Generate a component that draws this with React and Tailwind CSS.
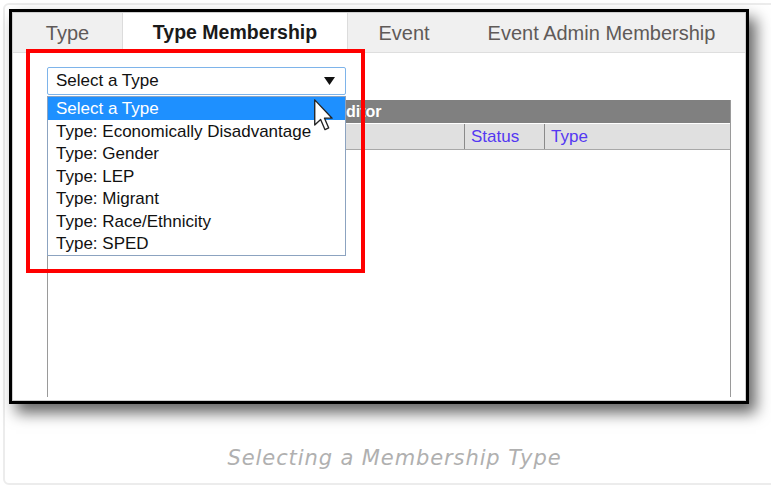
import React from 'react';

const options = [
  'Select a Type',
  'Type: Economically Disadvantage',
  'Type: Gender',
  'Type: LEP',
  'Type: Migrant',
  'Type: Race/Ethnicity',
  'Type: SPED',
];

const tabs = [
  { label: 'Type', width: 'w-[109px]' },
  { label: 'Type Membership', width: 'w-[226px]', active: true },
  { label: 'Event', width: 'w-[112px]' },
  { label: 'Event Admin Membership', width: 'w-[283px]' },
];

// Classic arrow pointer
const Pointer = () => (
  <svg width="22" height="32" viewBox="0 0 12 19" className="absolute left-[313px] top-[99px] z-30">
    <path
      d="M0.5 0.5 L0.5 15.5 L4 12.2 L6.6 18.2 L8.8 17.2 L6.3 11.4 L10.8 11.4 Z"
      fill="#fff"
      stroke="#222"
      strokeWidth="0.8"
      strokeLinejoin="round"
    />
  </svg>
);

const TabBar = () => (
  <div className="flex h-[40px] bg-[#f0f0f0] border-b border-[#dedede]">
    {tabs.map((tab) =>
      tab.active ? (
        <div
          key={tab.label}
          className={`${tab.width} flex items-center justify-center bg-white border-x border-[#dcdcdc] -mb-px text-[19.5px] font-bold text-[#1a1a1a]`}
        >
          {tab.label}
        </div>
      ) : (
        <div
          key={tab.label}
          className={`${tab.width} flex items-center justify-center text-[20px] text-[#5f5a58]`}
        >
          {tab.label}
        </div>
      )
    )}
  </div>
);

const TypeSelect = () => (
  <div className="relative w-[299px]">
    <div className="flex h-[28px] items-center justify-between rounded-[2px] border border-[#7eb4ea] bg-white pl-[8px] pr-[10px] text-[17px] text-[#111]">
      <span>Select a Type</span>
      <svg width="11" height="8" viewBox="0 0 11 8">
        <polygon points="0,0 11,0 5.5,8" fill="#111" />
      </svg>
    </div>
    {/* open option list */}
    <div className="absolute left-0 top-[29px] z-10 w-[299px] border border-[#8ca3c0] bg-white">
      {options.map((opt, i) => (
        <div
          key={opt}
          className={
            i === 0
              ? 'flex h-[22.5px] items-center bg-[#1e90ff] pl-[8px] pt-px text-[17px] text-white'
              : 'flex h-[22.5px] items-center pl-[8px] pt-px text-[17px] text-[#111]'
          }
        >
          {opt}
        </div>
      ))}
    </div>
  </div>
);

const MembershipTable = () => (
  <div className="mt-[5px] flex w-[684px] flex-1 flex-col border-x border-[#9a9a9a]">
    <div className="flex h-[23px] items-center bg-[#808080] pl-[148px] text-[16px] font-bold text-white">
      Type Membership Editor
    </div>
    <div className="flex h-[27px] border-t border-white border-b border-b-[#a8a8a8] bg-[#e0e0e0] text-[17px] text-[#5438f2]">
      <div className="w-[417px] border-r border-[#8a8a8a]" />
      <div className="flex w-[80px] items-center border-r border-[#8a8a8a] pl-[6px]">Status</div>
      <div className="flex flex-1 items-center pl-[6px]">Type</div>
    </div>
    <div className="flex-1 bg-white" />
  </div>
);

export default function App() {
  return (
    <div
      className="relative h-[487px] w-[771px] overflow-hidden bg-white pl-[3px] pt-[3px]"
      style={{ fontFamily: '"Liberation Sans", Arial, sans-serif' }}
    >
      <div className="flex h-[482px] w-[790px] flex-col rounded-[6px] border-2 border-[#ececec] pl-[4px] pt-[4px]">
        {/* screenshot frame */}
        <div className="flex h-[395px] w-[740px] flex-col border-[3px] border-black bg-white shadow-[7px_9px_14px_rgba(0,0,0,0.6)]">
          <div className="flex flex-1 flex-col border border-[#d0d0d0]">
            <TabBar />
            <div className="flex flex-1 flex-col pl-[34px] pt-[14px] pb-[3px]">
              <TypeSelect />
              <MembershipTable />
            </div>
          </div>
        </div>
        <div
          className="mt-[40px] w-[771px] text-center text-[21px] italic leading-[28px] tracking-[0.9px] text-[#b0b0b0]"
          style={{ fontFamily: '"DejaVu Sans", Verdana, sans-serif' }}
        >
          Selecting a Membership Type
        </div>
      </div>

      {/* callout box */}
      <div className="absolute left-[26px] top-[49px] z-20 h-[224px] w-[339px] border-[4px] border-[#ff0000]" />
      <Pointer />
    </div>
  );
}
